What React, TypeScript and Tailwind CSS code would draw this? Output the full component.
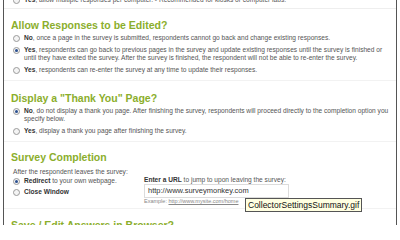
import React from 'react';

interface Option {
  label: string;
  rest: string;
  checked?: boolean;
}

const Radio = ({ checked }: { checked?: boolean }) => (
  <span className="mt-[1px] flex h-[7px] w-[7px] shrink-0 items-center justify-center rounded-full border border-[#9a9a9a] bg-[#f4f4f4]">
    {checked && <span className="h-[3px] w-[3px] rounded-full bg-[#2a4f8f]" />}
  </span>
);

const OptionRow = ({ label, rest, checked }: Option) => (
  <div className="flex items-start gap-[4px] pl-[9px] pr-[6px]">
    <Radio checked={checked} />
    <p className="text-[6.6px] leading-[8.5px] text-[#555]">
      <b className="text-[#333]">{label}</b>
      {rest}
    </p>
  </div>
);

const Heading = ({ children }: { children: React.ReactNode }) => (
  <h3 className="pl-[7px] text-[10.5px] font-bold leading-[13px] text-[#8bae2c]">{children}</h3>
);

export default function App() {
  return (
    <div
      className="relative h-[225px] w-[400px] overflow-hidden bg-white"
      style={{ fontFamily: '"Liberation Sans", Arial, sans-serif' }}
    >
      <div className="mx-[3px] flex h-full flex-col border-x border-x-[#555] bg-white">
        <div className="-mt-[4px] border-b border-[#eeeeee] pb-[3px]">
          <OptionRow label="Yes" rest=", allow multiple responses per computer.  - Recommended for kiosks or computer labs." />
        </div>

        <section className="border-b border-[#f2f2f2] pb-[5px] pt-[10px]">
          <Heading>Allow Responses to be Edited?</Heading>
          <div className="mt-[2px] flex flex-col gap-[3.5px]">
            <OptionRow label="No" rest=", once a page in the survey is submitted, respondents cannot go back and change existing responses." />
            <OptionRow
              checked
              label="Yes"
              rest=", respondents can go back to previous pages in the survey and update existing responses until the survey is finished or until they have exited the survey. After the survey is finished, the respondent will not be able to re-enter the survey."
            />
            <OptionRow label="Yes" rest=", respondents can re-enter the survey at any time to update their responses." />
          </div>
        </section>

        <section className="border-b border-[#f2f2f2] pb-[6px] pt-[11px]">
          <Heading>Display a &quot;Thank You&quot; Page?</Heading>
          <div className="mt-[2px] flex flex-col gap-[3px]">
            <OptionRow
              checked
              label="No"
              rest=", do not display a thank you page. After finishing the survey, respondents will proceed directly to the completion option you specify below."
            />
            <OptionRow label="Yes" rest=", display a thank you page after finishing the survey." />
          </div>
        </section>

        <section className="border-b border-[#f2f2f2] pb-[3px] pt-[9px]">
          <Heading>Survey Completion</Heading>
          <div className="mt-[3px] flex">
            <div className="w-[140px] shrink-0">
              <p className="pl-[9px] text-[6.6px] leading-[9px] text-[#555]">After the respondent leaves the survey:</p>
              <div className="mt-[1px] flex flex-col gap-[2.5px]">
                <OptionRow checked label="Redirect" rest=" to your own webpage." />
                <OptionRow label="Close Window" rest="" />
              </div>
            </div>
            <div className="pt-[8px]">
              <p className="text-[6.6px] leading-[9px] text-[#555]">
                <b className="text-[#333]">Enter a URL</b> to jump to upon leaving the survey:
              </p>
              <div className="h-[14px] w-[145px] border border-[#dcdcdc] bg-white px-[3px] text-[7.5px] leading-[12px] text-[#333]">
                http://www.surveymonkey.com
              </div>
              <p className="text-[5.5px] leading-[7px] text-[#888]">
                Example: <span className="underline">http://www.mysite.com/home</span>
              </p>
            </div>
          </div>
        </section>

        <section className="pt-[10px]">
          <Heading>Save / Edit Answers in Browser?</Heading>
        </section>
      </div>

      <div className="absolute left-[245px] top-[198px] border border-[#555] bg-[#ffffe1] px-[2px] text-[8.5px] leading-[12px] text-[#111]">
        CollectorSettingsSummary.gif
      </div>
    </div>
  );
}
